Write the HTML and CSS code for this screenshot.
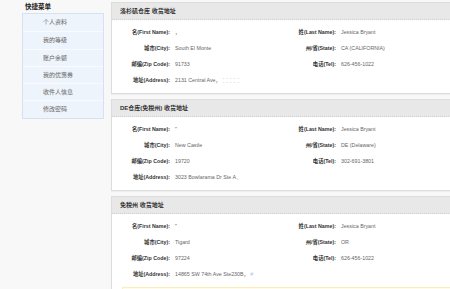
FILE: index.html
```html
<!DOCTYPE html>
<html lang="zh-CN">
<head>
  <meta charset="UTF-8">
  <title>收货地址</title>
  <link rel="stylesheet" href="styles.css">
</head>
<body>
  <div class="wrap">
    <!-- 左侧菜单 -->
    <div class="side">
      <h4>快捷菜单</h4>
      <ul class="menu">
        <li>个人资料</li>
        <li>我的等级</li>
        <li>账户余额</li>
        <li>我的优惠券</li>
        <li>收件人信息</li>
        <li>修改密码</li>
      </ul>
    </div>

    <!-- 地址列表 -->
    <div class="main">
      <div class="panel">
        <div class="panel-hd">洛杉矶仓库 收货地址</div>
        <div class="panel-bd">
          <span class="lb">名(First Name):</span><span class="val">，</span>
          <span class="lb">姓(Last Name):</span><span class="val">Jessica Bryant</span>
          <span class="lb">城市(City):</span><span class="val">South El Monte</span>
          <span class="lb">州/省(State):</span><span class="val">CA (CALIFORNIA)</span>
          <span class="lb">邮编(Zip Code):</span><span class="val">91733</span>
          <span class="lb">电话(Tel):</span><span class="val">626-456-1022</span>
          <span class="lb">地址(Address):</span><span class="val">2131 Central Ave， <em class="tip">：：：：：</em></span>
        </div>
      </div>

      <div class="panel">
        <div class="panel-hd">DE仓库(免税州) 收货地址</div>
        <div class="panel-bd">
          <span class="lb">名(First Name):</span><span class="val">"</span>
          <span class="lb">姓(Last Name):</span><span class="val">Jessica Bryant</span>
          <span class="lb">城市(City):</span><span class="val">New Castle</span>
          <span class="lb">州/省(State):</span><span class="val">DE (Delaware)</span>
          <span class="lb">邮编(Zip Code):</span><span class="val">19720</span>
          <span class="lb">电话(Tel):</span><span class="val">302-691-3801</span>
          <span class="lb">地址(Address):</span><span class="val">3023 Bowlarama Dr Ste A ,</span>
        </div>
      </div>

      <div class="panel">
        <div class="panel-hd">免税州 收货地址</div>
        <div class="panel-bd">
          <span class="lb">名(First Name):</span><span class="val">"</span>
          <span class="lb">姓(Last Name):</span><span class="val">Jessica Bryant</span>
          <span class="lb">城市(City):</span><span class="val">Tigard</span>
          <span class="lb">州/省(State):</span><span class="val">OR</span>
          <span class="lb">邮编(Zip Code):</span><span class="val">97224</span>
          <span class="lb">电话(Tel):</span><span class="val">626-456-1022</span>
          <span class="lb">地址(Address):</span><span class="val">14865 SW 74th Ave Ste230B， <em class="tip">#</em></span>
        </div>
        <div class="notice">&nbsp;</div>
      </div>
    </div>
  </div>
</body>
</html>
```

FILE: styles.css
```css
* {
  margin: 0;
  padding: 0;
  box-sizing: border-box;
}

html, body {
  height: 100%;
  overflow: hidden;
}

body {
  background: #f8f8f8;
  font-family: "Liberation Sans", "Noto Sans CJK SC", sans-serif;
  color: #333;
}

.wrap {
  display: flex;
  align-items: flex-start;
  gap: 7px;
  padding: 2px 0 0 22px;
  width: 470px;
}

/* Sidebar */
.side {
  width: 82px;
  flex-shrink: 0;
}

.side h4 {
  font-size: 6.5px;
  font-weight: bold;
  color: #222;
  padding-left: 3px;
  height: 11px;
  line-height: 10px;
}

.menu {
  list-style: none;
  background: #eef4fc;
  border: 1px solid #d6e2f2;
}

.menu li {
  height: 17.3px;
  line-height: 17px;
  padding-left: 20px;
  font-size: 6px;
  color: #666;
  border-top: 1px solid #f8fbff;
}

.menu li:first-child {
  border-top: none;
}

/* Panels */
.main {
  flex: 1;
}

.panel {
  background: #fff;
  border: 1px solid #dcdcdc;
  margin-bottom: 5px;
  box-shadow: 0 1px 1px rgba(0, 0, 0, 0.04);
}

.panel-hd {
  height: 17px;
  line-height: 17px;
  background: #e8e8e8;
  border-bottom: 1px dotted #cfcfcf;
  padding-left: 8px;
  font-size: 6px;
  font-weight: bold;
  color: #333;
}

.panel-bd {
  display: grid;
  grid-template-columns: 58px 95px 61px 1fr;
  column-gap: 5px;
  grid-auto-rows: 16px;
  align-items: center;
  padding: 4px 0 5px;
  font-size: 5.3px;
}

.lb {
  text-align: right;
  font-weight: bold;
  color: #333;
}

.val {
  color: #666;
  white-space: nowrap;
}

.val .tip {
  font-style: normal;
  color: #a9c6ea;
  letter-spacing: 1px;
}

.notice {
  margin: 0 10px 0 10px;
  height: 10px;
  background: #fffbe8;
  border: 1px solid #fbeeb8;
}
```
